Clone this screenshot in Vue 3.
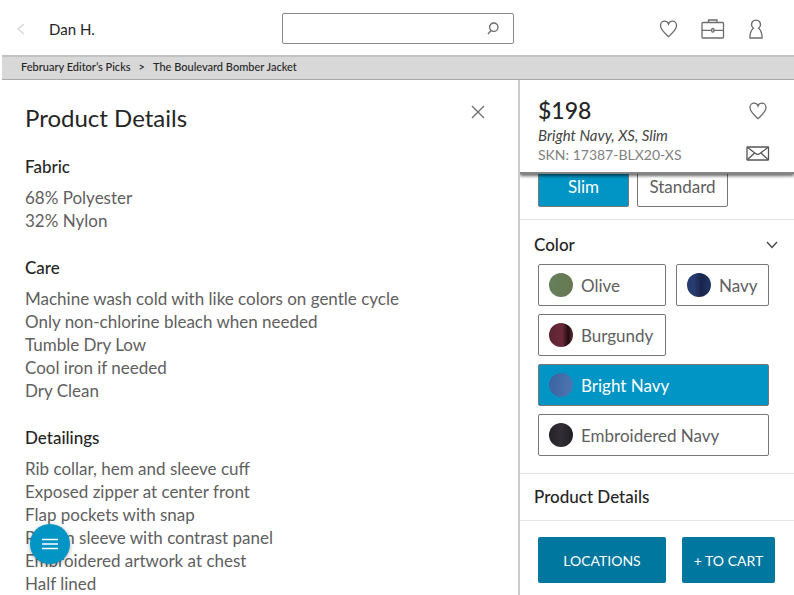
<script setup>
import { ref } from 'vue'

const query = ref('')
const selectedFit = ref('Slim')
const selectedColor = ref('Bright Navy')

const fits = ['Slim', 'Standard']

const colors = [
  { name: 'Olive', tone: 'olive' },
  { name: 'Navy', tone: 'navy' },
  { name: 'Burgundy', tone: 'burgundy' },
  { name: 'Bright Navy', tone: 'bright-navy', wide: true },
  { name: 'Embroidered Navy', tone: 'embroidered', wide: true },
]

const details = [
  { title: 'Fabric', lines: ['68% Polyester', '32% Nylon'] },
  {
    title: 'Care',
    lines: [
      'Machine wash cold with like colors on gentle cycle',
      'Only non-chlorine bleach when needed',
      'Tumble Dry Low',
      'Cool iron if needed',
      'Dry Clean',
    ],
  },
  {
    title: 'Detailings',
    lines: [
      'Rib collar, hem and sleeve cuff',
      'Exposed zipper at center front',
      'Flap pockets with snap',
      'Raglan sleeve with contrast panel',
      'Embroidered artwork at chest',
      'Half lined',
    ],
  },
]
</script>

<template>
  <div class="page">
    <header class="topbar">
      <div class="client">
        <button class="icon-button back" aria-label="Back">
          <svg width="8" height="12" viewBox="0 0 8 12"><path d="M7 1 1 6l6 5" /></svg>
        </button>
        <span class="client-name">Dan H.</span>
      </div>
      <form class="search" role="search" @submit.prevent>
        <input v-model="query" type="text" aria-label="Search" />
        <button class="icon-button" aria-label="Submit search">
          <svg width="12" height="14" viewBox="0 0 12 14">
            <circle cx="6.8" cy="5.2" r="4.2" />
            <path d="M4 8.5 1 12" />
          </svg>
        </button>
      </form>
      <nav class="tools">
        <button class="icon-button" aria-label="Favorites">
          <svg width="17" height="18" viewBox="0.5 0 17 18">
            <path d="M9 16.6C6 13.8 1 10 1 5.6 1 3 2.8 1.2 5 1.2c1.900 0 3.300 1 4 2.900.7-1.900 2.100-2.900 4-2.900 2.200 0 4 1.800 4 4.400 0 4.400-5 8.200-8 11Z" />
          </svg>
        </button>
        <button class="icon-button" aria-label="Bag">
          <svg width="24" height="20" viewBox="0 0 24 20">
            <rect x="1" y="3.500" width="21.500" height="15.500" rx="1" />
            <path d="M7.500 3.500V1h8.500v2.500M1 11.300h9.500M13 11.300h9.500" />
            <rect x="10.700" y="9.500" width="2.200" height="3.600" rx="1" />
          </svg>
        </button>
        <button class="icon-button" aria-label="Account">
          <svg width="14" height="20" viewBox="0 0 14 20">
            <path d="M4.400 9.200a4.500 4.500 0 1 1 5.200 0c2.100 1.600 3.500 5 3.500 9.800H.9c0-4.800 1.400-8.200 3.500-9.800Z" />
          </svg>
        </button>
      </nav>
    </header>

    <nav class="breadcrumb" aria-label="Breadcrumb">
      <a href="#picks">February Editor’s Picks</a>
      <span>&gt;</span>
      <a href="#jacket">The Boulevard Bomber Jacket</a>
    </nav>

    <div class="columns">
      <main class="details">
        <div class="details-head">
          <h1>Product Details</h1>
          <button class="icon-button" aria-label="Close">
            <svg width="14" height="14" viewBox="0 0 14 14"><path d="m1 1 12 12M13 1 1 13" /></svg>
          </button>
        </div>
        <section v-for="group in details" :key="group.title" class="group">
          <h2>{{ group.title }}</h2>
          <ul>
            <li v-for="line in group.lines" :key="line">{{ line }}</li>
          </ul>
        </section>
      </main>

      <aside class="options">
        <div class="summary">
          <div>
            <p class="price">$198</p>
            <p class="variant">Bright Navy, XS, Slim</p>
            <p class="sku">SKN: 17387-BLX20-XS</p>
          </div>
          <div class="summary-actions">
            <button class="icon-button" aria-label="Add to favorites">
              <svg width="18" height="18" viewBox="0 0 18 18">
                <path d="M9 16.600C6 13.800 1 10 1 5.600 1 3 2.800 1.200 5 1.200c1.900 0 3.300 1 4 2.900.7-1.900 2.100-2.900 4-2.900 2.200 0 4 1.800 4 4.400 0 4.400-5 8.200-8 11Z" />
              </svg>
            </button>
            <button class="icon-button" aria-label="Send by mail">
              <svg class="mail" width="24" height="15" viewBox="0 0 24 15">
                <rect x="1" y="1" width="21.500" height="13" rx="0.5" />
                <path d="m1 1 8.500 6.500q2.200 1.800 4.500 0L22.500 1M1 14l7.500-7M22.500 14l-7.500-7" />
              </svg>
            </button>
          </div>
        </div>

        <section class="fit" aria-label="Fit">
          <button
            v-for="fit in fits"
            :key="fit"
            class="choice centered"
            :class="{ selected: fit === selectedFit }"
            :aria-pressed="fit === selectedFit"
            @click="selectedFit = fit"
          >
            {{ fit }}
          </button>
        </section>

        <section class="color">
          <div class="section-head">
            <h3>Color</h3>
            <button class="icon-button chevron" aria-label="Collapse color">
              <svg width="12" height="8" viewBox="0 0 12 8"><path d="m1 1 5 5.500L11 1" /></svg>
            </button>
          </div>
          <div class="swatches">
            <button
              v-for="color in colors"
              :key="color.name"
              class="choice"
              :class="{ selected: color.name === selectedColor, wide: color.wide }"
              :aria-pressed="color.name === selectedColor"
              @click="selectedColor = color.name"
            >
              <span class="swatch" :class="color.tone"></span>
              {{ color.name }}
            </button>
          </div>
        </section>

        <section class="section-link">
          <h3>Product Details</h3>
        </section>

        <div class="actions">
          <button class="action">LOCATIONS</button>
          <button class="action">+ TO CART</button>
        </div>
      </aside>
    </div>

    <button class="menu" aria-label="Menu">
      <svg width="16" height="12" viewBox="0 0 16 12"><path d="M0 1.500h16M0 6h16M0 10.500h16" /></svg>
    </button>
  </div>
</template>

<style>
body {
  margin: 0;
  background: #fff;
}
</style>

<style scoped>
.page {
  display: flex;
  flex-direction: column;
  height: 100vh;
  overflow: hidden;
  font-family: Lato, "Open Sans", sans-serif;
  color: #252525;
}

.page * {
  box-sizing: border-box;
}

h1,
h2,
h3,
p,
ul {
  margin: 0;
  padding: 0;
}

ul {
  list-style: none;
}

button {
  font-family: inherit;
  cursor: pointer;
}

svg {
  display: block;
  fill: none;
  stroke: #6c6c6c;
  stroke-width: 1.3;
}

.icon-button {
  padding: 0;
  border: 0;
  background: none;
}

.topbar {
  display: grid;
  grid-template-columns: 1fr 232px 1fr;
  align-items: center;
  flex: none;
  height: 55px;
  padding: 2px 0 0 2px;
}

.client {
  display: flex;
  align-items: center;
  gap: 24px;
  padding-left: 15px;
}

.back svg {
  stroke: #d4d4d4;
}

.client-name {
  font-size: 15px;
  line-height: 16px;
}

.search {
  display: flex;
  align-items: center;
  height: 31px;
  padding-right: 14px;
  border: 1px solid #8a8a8a;
  border-radius: 2px;
}

.search input {
  flex: 1;
  min-width: 0;
  height: 100%;
  padding: 0 10px;
  border: 0;
  outline: 0;
  background: none;
  font: inherit;
}

.tools {
  display: flex;
  align-items: center;
  justify-content: flex-end;
  gap: 24px;
  padding-right: 31px;
}

.breadcrumb {
  display: flex;
  flex: none;
  gap: 8px;
  height: 25px;
  margin-left: 2px;
  padding-left: 19px;
  border-top: 2px solid #c2c2c2;
  border-bottom: 1px solid #aaa;
  background: #d8d8d8;
  font-size: 11px;
  font-weight: 500;
  line-height: 20px;
}

.breadcrumb a {
  color: inherit;
  text-decoration: none;
}

.columns {
  display: grid;
  grid-template-columns: 1fr 276px;
  flex: 1;
  min-height: 0;
}

.details {
  overflow: auto;
  scrollbar-width: none;
  padding: 20px 33px 0 25px;
}

.details-head {
  display: flex;
  justify-content: space-between;
  align-items: flex-start;
  padding-bottom: 19px;
}

.details-head .icon-button {
  padding-top: 5px;
}

h1 {
  font-size: 24px;
  font-weight: 400;
  line-height: 36px;
}

.group {
  padding-bottom: 24px;
}

h2,
h3 {
  font-size: 17px;
  font-weight: 500;
  line-height: 24px;
}

h2 {
  padding-bottom: 7px;
}

li {
  color: #606060;
  font-size: 17px;
  line-height: 23px;
}

.options {
  overflow: auto;
  scrollbar-width: none;
  border-left: 2px solid #ccc;
}

.summary {
  position: sticky;
  top: 0;
  z-index: 1;
  display: flex;
  justify-content: space-between;
  height: 94px;
  padding: 15px 24px 0 18px;
  border-bottom: 2px solid #858585;
  background: #fff;
  box-shadow: 0 2px 3px rgba(0, 0, 0, 0.6);
}

.price {
  font-size: 23px;
  font-weight: 500;
  line-height: 30px;
}

.variant {
  color: #444;
  font-size: 15px;
  font-style: italic;
  line-height: 20px;
}

.sku {
  color: #808080;
  font-size: 14px;
  line-height: 20px;
}

.summary-actions {
  display: flex;
  flex-direction: column;
  align-items: center;
  gap: 26px;
  padding-top: 7px;
}

.mail {
  stroke: #555;
}

.fit {
  display: grid;
  grid-template-columns: repeat(2, 91px);
  gap: 8px;
  margin-top: -9px;
  padding: 0 18px 12px;
  border-bottom: 1px solid #e4e4e4;
}

.choice {
  display: flex;
  align-items: center;
  gap: 8px;
  height: 42px;
  padding: 0 0 0 10px;
  border: 1px solid #777;
  border-radius: 2px;
  background: #fff;
  color: #606060;
  font-size: 17px;
  white-space: nowrap;
}

.choice.centered {
  justify-content: center;
  padding: 0;
}

.choice.selected {
  background: #0095c5;
  color: #fff;
}

.color {
  padding: 13px 0 17px;
  border-bottom: 1px solid #e4e4e4;
}

.section-head {
  display: flex;
  align-items: center;
  justify-content: space-between;
  padding: 0 16px 7px 14px;
}

.chevron svg {
  stroke: #444;
}

.swatches {
  display: grid;
  grid-template-columns: 11fr 8fr;
  gap: 8px 10px;
  padding: 0 25px 0 18px;
}

.wide {
  grid-column: 1 / -1;
}

.swatch {
  width: 24px;
  height: 24px;
  border-radius: 50%;
}

.olive {
  background: linear-gradient(90deg, #65805c, #687951);
}

.navy {
  background: linear-gradient(90deg, #263c70 30%, #18234b 60%, #233566);
}

.burgundy {
  background: linear-gradient(90deg, #5b2432, #6b2a38 55%, #220d13 80%, #5d2934);
}

.bright-navy {
  background: linear-gradient(100deg, #3c62a0, #4d77b2);
}

.embroidered {
  background: linear-gradient(90deg, #242229, #302e34 50%, #211f25);
}

.section-link {
  padding: 11px 14px;
  border-bottom: 1px solid #e4e4e4;
}

.actions {
  display: grid;
  grid-template-columns: 11fr 8fr;
  gap: 16px;
  padding: 16px 19px 12px 18px;
}

.action {
  height: 46px;
  padding: 0;
  border: 0;
  border-radius: 2px;
  background: #00779e;
  color: #fff;
  font-size: 14px;
  white-space: nowrap;
}

.menu {
  position: fixed;
  bottom: 31px;
  left: 30px;
  z-index: 2;
  display: grid;
  place-items: center;
  width: 40px;
  height: 40px;
  padding: 0;
  border: 0;
  border-radius: 50%;
  background: #0095c5;
  box-shadow: 0 1px 4px rgba(0, 0, 0, 0.35);
}

.menu svg {
  stroke: #fff;
}
</style>
